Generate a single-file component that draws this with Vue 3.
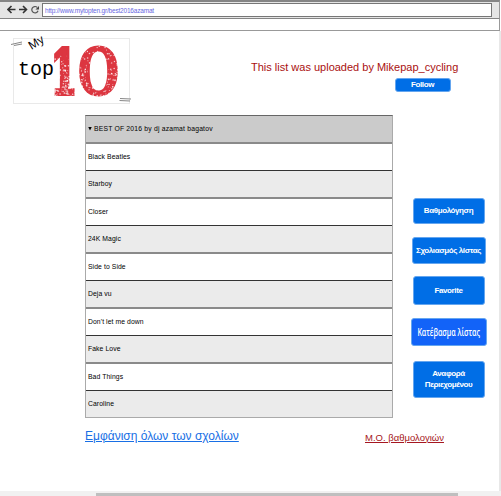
<script setup>
const songs = [
  'Black Beatles',
  'Starboy',
  'Closer',
  '24K Magic',
  'Side to Side',
  'Deja vu',
  "Don't let me down",
  'Fake Love',
  'Bad Things',
  'Caroline',
]
// Seeded generator keeps the worn-ink texture of the logo stable between renders.
let seed = 42
const rnd = () => (seed = (seed * 16807) % 2147483647) / 2147483647
const specks = Array.from({ length: 420 }, () => {
  const x = 40 + rnd() * 68
  const u = rnd()
  const y = x < 66 ? 16 + Math.pow(u, 0.5) * 45 : 11 + Math.pow(u, 0.7) * 50
  return { x, y, r: 0.25 + rnd() * 0.65 }
})
</script>

<template>
  <div class="window">
    <header class="toolbar">
      <svg class="nav" width="34" height="12" viewBox="0 0 34 12">
        <g fill="none" stroke="#333" stroke-width="1.6">
          <path d="M1 5.5H8.5M4.5 2L1 5.5L4.5 9" />
          <path d="M12 5.5H19.5M16 2L19.5 5.5L16 9" />
          <path d="M30.2 3.4A3.2 3.2 0 1 0 31 6.8" stroke="#555" stroke-width="1.2" />
        </g>
        <path d="M28.500 5.400H32V1.900Z" fill="#444" />
      </svg>
      <div class="address"><span>http://www.mytopten.gr/best2016azamat</span></div>
    </header>
    <div class="subbar"></div>

    <main class="page">
      <section class="top">
        <svg class="logo" width="124" height="72" viewBox="0 0 124 72">
          <rect x="2.5" y="3.5" width="116" height="65" fill="#fff" stroke="#e9e9e9" />
          <path d="M0 9.5L11 7M3 10.5L11 9" stroke="#888" stroke-width="1" />
          <path d="M109 63.5L120 64M108.5 65.5L119 66" stroke="#888" stroke-width="1" />
          <text class="my" transform="translate(20.5 15) rotate(-32)">My</text>
          <text class="top-word" x="7" y="40" textLength="36" lengthAdjust="spacingAndGlyphs">top</text>
          <text class="digit one" transform="translate(53 59.300) scale(.62 1)">1</text>
          <text class="digit zero" transform="translate(87.500 59.500) scale(1.110 1)">0</text>
          <circle v-for="(s, i) in specks" :key="i" :cx="s.x" :cy="s.y" :r="s.r" fill="#fff" opacity=".75" />
        </svg>
        <div class="uploader">
          <p>This list was uploaded by Mikepap_cycling</p>
          <button class="follow">Follow</button>
        </div>
      </section>

      <section class="middle">
        <div class="list">
          <div class="row head"><span class="arrow"></span><span>BEST OF 2016 by dj azamat bagatov</span></div>
          <div v-for="song in songs" :key="song" class="row"><span>{{ song }}</span></div>
        </div>
        <nav class="actions">
          <button class="rate">Βαθμολόγηση</button>
          <button class="comment">Σχολιασμός λίστας</button>
          <button class="favorite">Favorite</button>
          <button class="download"><span>Κατέβασμα λίστας</span></button>
          <button class="report">Αναφορά<br />Περιεχομένου</button>
        </nav>
      </section>

      <footer class="links">
        <a class="all">Εμφάνιση όλων των σχολίων</a>
        <a class="average">Μ.Ο. βαθμολογιών</a>
      </footer>
    </main>
    <div class="scroll"><div class="thumb"></div></div>
  </div>
</template>

<style>
body { overflow: hidden; }
</style>
<style scoped>
* { box-sizing: border-box; }
.window { width: 501px; height: 496px; display: flex; flex-direction: column; background: #fff; font-family: "Liberation Sans", sans-serif; overflow: hidden; }
.toolbar { flex: none; height: 19px; width: 500px; display: flex; background: #e5e5e5; border-top: 2px solid #858585; border-bottom: 1px solid #858585; border-right: 1px solid #999; padding: 1px 7px 1px 7px; }
.nav { flex: none; margin-top: 1px; }
.address { width: 450px; height: 14px; margin-left: 1px; background: #fff; border: 1px solid #777; padding-left: 2px; font-size: 6.5px; line-height: 14px; color: #6868e2; white-space: nowrap; }
.address span { letter-spacing: -.19px; }
.subbar { flex: none; width: 500px; height: 12px; border: 1px solid #999; border-left: 0; border-top: 0; }
.page { flex: none; height: 460px; width: 501px; border-right: 2px solid #e8e8e8; display: flex; flex-direction: column; }
.top { display: flex; height: 84px; }
.logo { flex: none; margin: 4px 0 0 11px; overflow: visible; }
.my { font: 12px "Liberation Sans", sans-serif; }
.top-word { font: 20px "Liberation Mono", monospace; }
.digit { fill: #dc3640; stroke: #dc3640; text-anchor: middle; }
.one { font: bold 61px "DejaVu Serif", serif; stroke-width: 4px; }
.zero { font: 63px "DejaVu Serif", serif; stroke-width: 3px; }
.uploader { width: 208px; margin-left: 116px; padding-top: 28px; }
.uploader p { margin: 0; height: 17px; line-height: 17px; font-size: 11px; color: #a9100f; white-space: nowrap; }
button { border: 1px solid #65a6ef; border-radius: 3px; background: #006ee6; color: #fff; padding: 0 1px 1px 0; font: bold 8px/11px "Liberation Sans", sans-serif; letter-spacing: -.4px; white-space: nowrap; display: block; }
.follow { width: 56px; height: 14px; margin: 2px 0 0 144px; }
.middle { display: flex; height: 303px; padding-left: 85px; }
.list { width: 308px; border: 1px solid #aaa; border-top-color: #666; }
.row { height: 27px; border-bottom: 1px solid #333; padding: 0 0 1px 2px; display: flex; align-items: center; font-size: 6.8px; letter-spacing: .09px; color: #000; background: #fff; }
.row:nth-child(odd) { height: 28px; border-bottom: 2px solid #8a8a8a; background: #ebebeb; }
.row:nth-child(odd).head { background: #cbcbcb; letter-spacing: .19px; }
.row:nth-child(odd):last-child { height: 26px; border-bottom: 0; }
.arrow { width: 4px; height: 4px; background: #000; clip-path: polygon(0 0, 100% 0, 50% 100%); margin-right: 2px; }
.actions { width: 76px; margin-left: 18px; padding-top: 83px; }
.rate { width: 72px; height: 26px; margin-left: 2px; }
.comment { width: 74px; height: 27px; margin: 13px 0 0 1px; }
.favorite { width: 72px; height: 29px; margin: 12px 0 0 2px; }
.download { width: 76px; height: 28px; margin-top: 13px; background: #1263f8; font: 600 10px "Open Sans", sans-serif; letter-spacing: 0; }
.download span { display: inline-block; transform: scaleX(.7); margin: 0 -20px; }
.report { width: 72px; height: 37px; margin: 15px 0 0 2px; }
.links { display: flex; padding-left: 85px; }
.links a { text-decoration: underline; white-space: nowrap; }
.all { width: 280px; margin-top: 11px; font-size: 12px; line-height: 15px; color: #186fe5; }
.average { margin-top: 14px; font: 9.5px/12px "Liberation Sans", sans-serif; color: #a51721; }
.scroll { flex: none; height: 5px; background: #f1f1f1; padding-top: 2px; }
.thumb { width: 362px; height: 3px; margin-left: 96px; background: #bfbfbf; }
</style>
